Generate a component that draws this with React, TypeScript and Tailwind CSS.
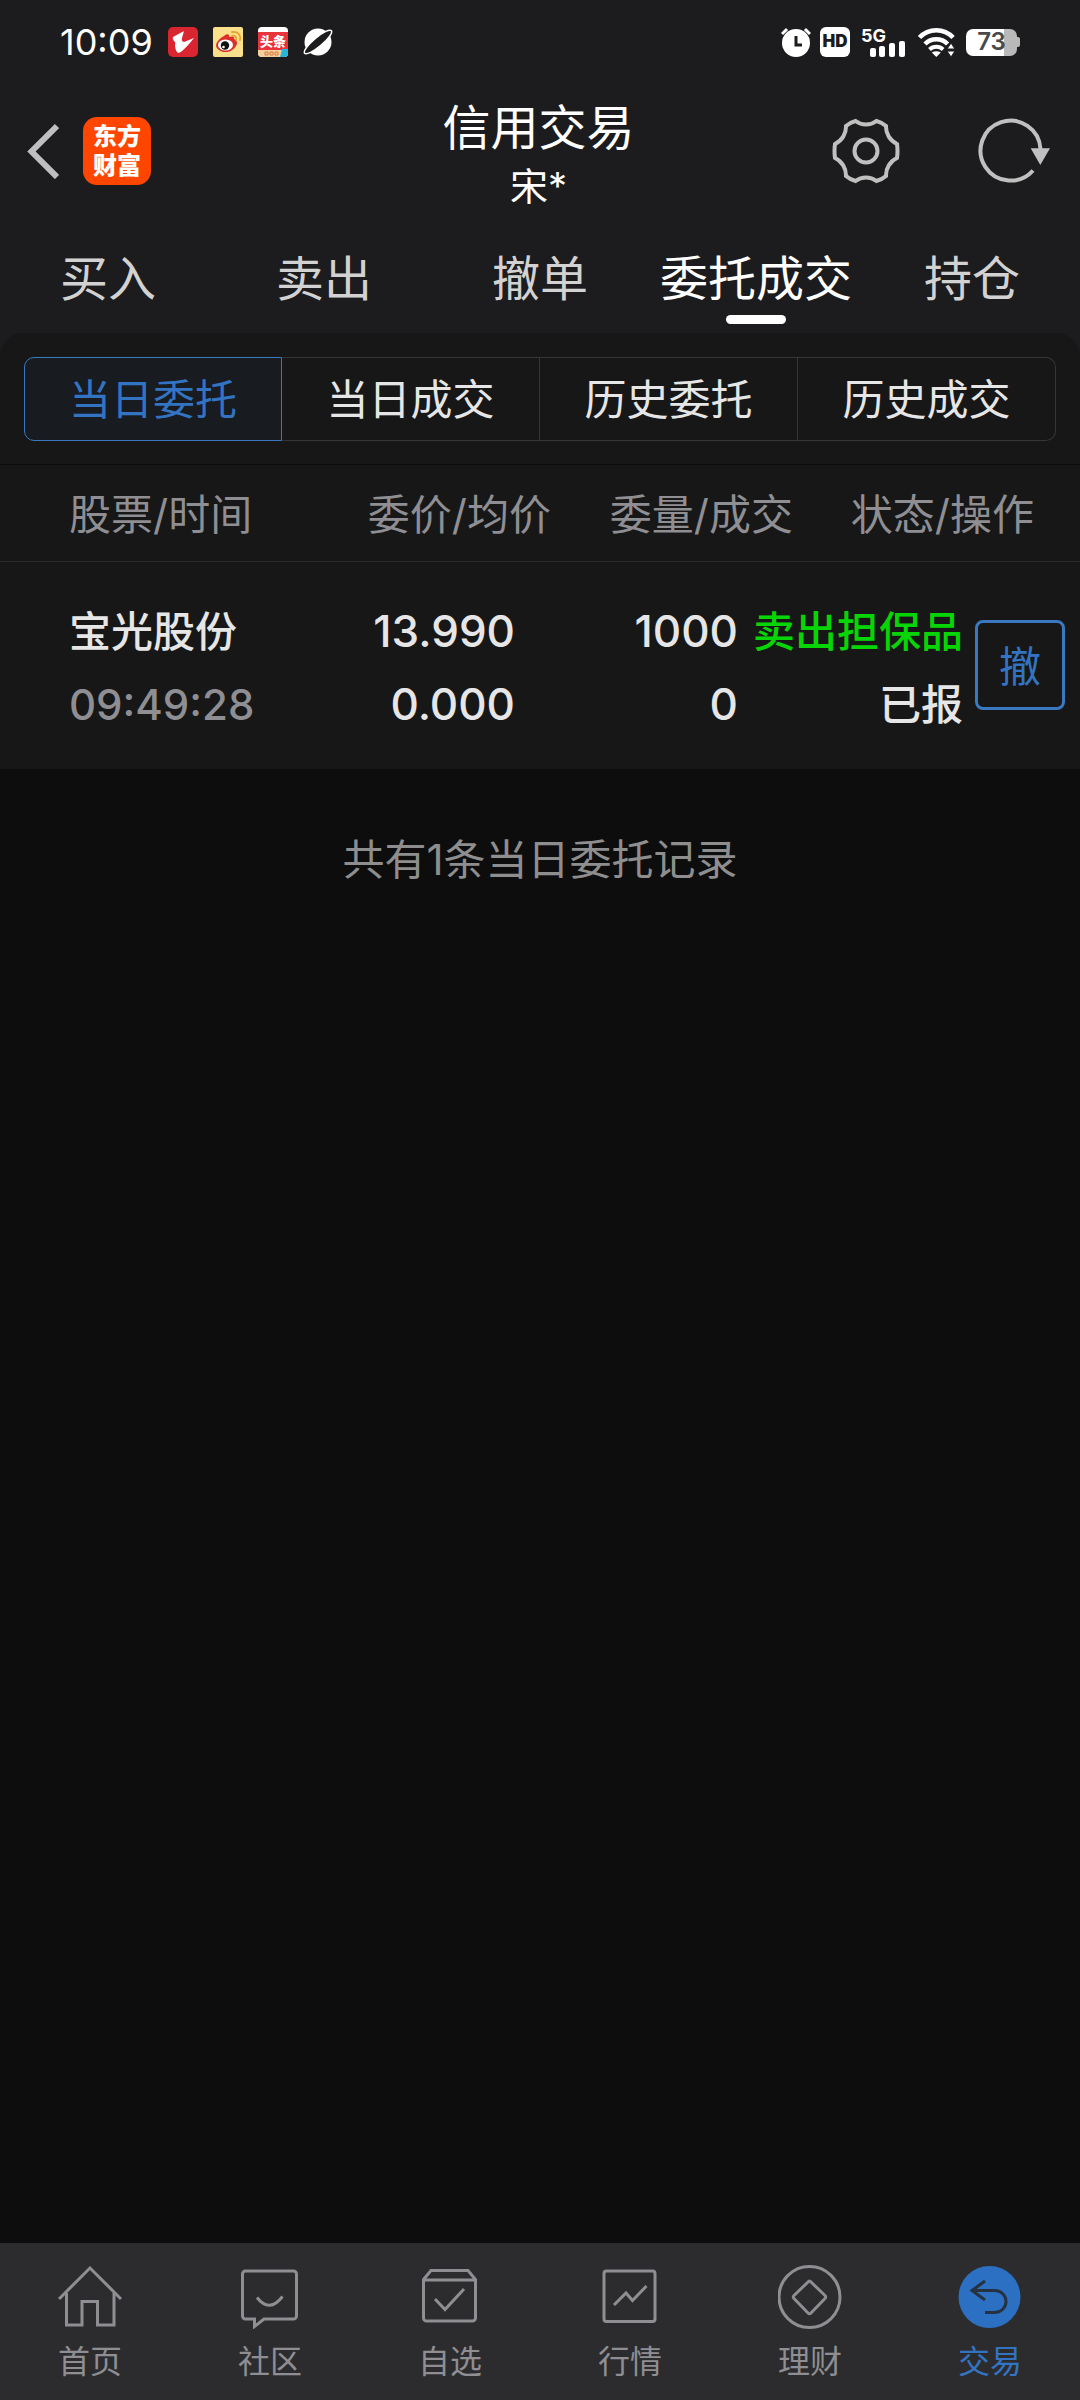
import React, { useState } from 'react';

interface Order {
  name: string;
  time: string;
  price: string;
  avgPrice: string;
  amount: number;
  filled: number;
  direction: string;
  status: string;
}

const tabs = ['买入', '卖出', '撤单', '委托成交', '持仓'];
const segments = ['当日委托', '当日成交', '历史委托', '历史成交'];

const orders: Order[] = [
  {
    name: '宝光股份',
    time: '09:49:28',
    price: '13.990',
    avgPrice: '0.000',
    amount: 1000,
    filled: 0,
    direction: '卖出担保品',
    status: '已报',
  },
];

const navItems = [
  {
    label: '首页',
    icon: (
      <>
        <path d="M1 34 32 3l31 31" />
        <path d="M8.500 28v32H24V36.500h15.500V60H56V28" />
      </>
    ),
  },
  {
    label: '社区',
    icon: (
      <>
        <path d="M7.500 6h48a3 3 0 0 1 3 3v42a3 3 0 0 1-3 3H26l-9.500 7.500V54h-9a3 3 0 0 1-3-3V9a3 3 0 0 1 3-3z" />
        <path d="M19 32.500q12.500 16 25.500-1" />
      </>
    ),
  },
  {
    label: '自选',
    icon: (
      <>
        <path d="M5.500 14.500 13 5.500h37l7.500 9V53a3 3 0 0 1-3 3h-46a3 3 0 0 1-3-3zM5.500 15h52" />
        <path d="m17 34 10 10.500L46 24" />
      </>
    ),
  },
  {
    label: '行情',
    icon: (
      <>
        <rect x="6" y="6" width="51" height="50.500" rx="2.500" />
        <path d="m16 40 12-12 6.500 7.500L48.500 21" />
      </>
    ),
  },
  {
    label: '理财',
    icon: (
      <>
        <circle cx="31.500" cy="32" r="30.500" />
        <path d="M30 17q1.500-2 3 0l14 13.500q1.500 1.500 0 3L33 48q-1.500 1.500-3 0L16 33.500q-1.500-1.500 0-3z" />
      </>
    ),
  },
  {
    label: '交易',
    icon: (
      <>
        <circle cx="31.500" cy="32" r="31" fill="#2b70c2" stroke="none" />
        <path d="M27 16 14 25.500 27 35M14 25.500h23a11 11 0 0 1 0 22H27" stroke="#26323f" />
      </>
    ),
  },
];

const StatusBar: React.FC = () => (
  <div className="flex h-[84px] items-center justify-between pl-[60px] pr-[60px] text-white">
    <div className="flex items-center gap-[15px]">
      <span className="text-[36px] leading-[40px]">10:09</span>
      <svg className="size-[30px]" viewBox="0 0 30 30">
        <rect width="30" height="30" rx="5" fill="#d9252f" />
        <path d="M16 4 5 10q-1 2 1 4 2 1 1 4 0 5 3 8 4 0 16-15l-10 4q-3-1-2-4z" fill="#fff" />
      </svg>
      <svg className="size-[30px]" viewBox="0 0 30 30">
        <rect width="30" height="30" rx="2" fill="#fbe08c" />
        <path d="M11 9c3-3 6-2 5 1 3-1 6-1 5 2 3 1 4 4 2 7-3 6-12 8-17 4-6-4-2-10 5-14z" fill="#dc2f2b" />
        <ellipse cx="12.500" cy="18" rx="7.500" ry="5.500" fill="#fff" />
        <circle cx="12" cy="18.500" r="4.200" fill="#111" />
        <circle cx="10.500" cy="20" r="1.300" fill="#fff" />
        <path d="M19 9c3-1 5 1 4 4M19 5c6-1 9 3 8 8" fill="none" stroke="#e8a32c" strokeWidth="1.800" strokeLinecap="round" />
      </svg>
      <svg className="size-[30px]" viewBox="0 0 30 30">
        <rect width="30" height="30" rx="4" fill="#fff" />
        <path d="M0 5h30v18H0z" fill="#e8343a" />
        <path d="M0 23h30v3a4 4 0 0 1-4 4H4a4 4 0 0 1-4-4z" fill="#f5cf9c" />
        <path d="M24 22h6v4a4 4 0 0 1-4 4h-4z" fill="#25b5d8" />
        <text x="15" y="19" textAnchor="middle" fontSize="13" fontWeight="900" fill="#fff">头条</text>
        <path d="M7 25h3v3H7zM12 25h3v3h-3zM17 25h3v3h-3z" fill="none" stroke="#d8783c" />
      </svg>
      <svg className="size-[30px]" viewBox="0 0 30 30" fill="none">
        <circle cx="15" cy="15" r="13.500" fill="#fff" />
        <ellipse cx="15" cy="15" rx="17.500" ry="4.500" transform="rotate(-40 15 15)" fill="#1c1c1e" stroke="#fff" strokeWidth="1.500" />
      </svg>
    </div>
    <div className="flex items-center gap-[9px]">
      <svg className="size-[30px]" viewBox="0 0 30 30">
        <circle cx="15" cy="16" r="14" fill="#fff" />
        <path d="m1 7 5-5M29 7l-5-5" stroke="#fff" strokeWidth="3" />
        <path d="M15 9v9h6" fill="none" stroke="#1c1c1e" strokeWidth="3" />
      </svg>
      <span className="flex size-[30px] items-center justify-center rounded-[6px] bg-white text-[17px] font-black text-[#1c1c1e]">HD</span>
      <svg className="h-[30px] w-[48px] overflow-visible" viewBox="-2 0 48 30" fill="#fff">
        <text x="0" y="15" fontSize="18" fontWeight="700">5G</text>
        <rect x="9" y="21" width="6" height="9" rx="2" />
        <rect x="18" y="19" width="6" height="11" rx="2" />
        <rect x="28" y="16" width="6" height="14" rx="2" />
        <rect x="38" y="14" width="6" height="16" rx="2" />
      </svg>
      <svg className="h-[30px] w-[41px]" viewBox="-2 0 41 30" fill="none" stroke="#fff" strokeWidth="4.500">
        <path d="M1.500 10.500a23 23 0 0 1 33.600 0" />
        <path d="M7 17a16 16 0 0 1 22.600 0" />
        <path d="M11.500 22.500a10 10 0 0 1 13.600 0" strokeWidth="4" />
        <path d="m18.300 30-4.500-4.500q4.500-2.500 9 0z" fill="#fff" stroke="none" />
        <path d="m33 16 4 6h-8zM33 30l4-6h-8z" fill="#fff" stroke="#1c1c1e" strokeWidth="1" />
      </svg>
      <div className="flex items-center">
        <span className="flex h-[27px] w-[51px] items-center justify-center rounded-[7px] bg-linear-to-r from-white from-75% to-[#b9b9b9] to-75% text-[24px] font-semibold text-[#4a4a4a]">73</span>
        <span className="h-[10px] w-[3px] rounded-r-[2px] bg-[#b9b9b9]" />
      </div>
    </div>
  </div>
);

const TitleBar: React.FC = () => (
  <div className="grid h-[134px] grid-cols-[1fr_auto_1fr] items-center pl-[27px] pr-[30px]">
    <div className="flex items-center gap-6">
      <button aria-label="返回">
        <svg className="h-14 w-8" viewBox="0 0 32 56" fill="none" stroke="#bfbfbf" strokeWidth="6">
          <path d="M30 3 4.500 28.500 30 54" />
        </svg>
      </button>
      <div className="flex size-[68px] flex-col items-center justify-center rounded-[14px] bg-[#ff4600] text-[24px] font-black leading-[29px] text-white">
        <span>东方</span>
        <span>财富</span>
      </div>
    </div>
    <div className="pt-[6px] text-center text-white">
      <h1 className="text-[48px] leading-[64px]">信用交易</h1>
      <p className="text-[38px] leading-[52px]">宋*</p>
    </div>
    <div className="flex items-center justify-end gap-[78px]">
      <button aria-label="设置">
        <svg className="size-[68px]" viewBox="-34 -34 68 68" fill="none" stroke="#c0c0c0" strokeWidth="4">
          <path d="M31-7Q32 0 31 7A19 19 0 0 0 20 25Q16 28.500 10.400 30A17 17 0 0 0-10.400 30Q-16 28.500-20 25A19 19 0 0 0-31 7Q-32 0-31-7A19 19 0 0 0-20-25Q-16-28.500-10.400-30A17 17 0 0 0 10.400-30Q16-28.500 20-25A19 19 0 0 0 31-7Z" />
          <circle r="11.500" />
        </svg>
      </button>
      <button aria-label="刷新">
        <svg className="h-[66px] w-[72px]" viewBox="0 0 72 66" fill="none" stroke="#c0c0c0" strokeWidth="4">
          <path d="M62.500 31A30 30 0 1 0 55 52.500" />
          <path d="M52.700 30.300H72L62.300 47z" fill="#c0c0c0" stroke="none" />
        </svg>
      </button>
    </div>
  </div>
);

const App: React.FC = () => {
  const [tab, setTab] = useState('委托成交');
  const [segment, setSegment] = useState('当日委托');

  return (
    <div className="flex min-h-screen flex-col bg-[#0d0d0d] font-['Inter','Noto_Sans_CJK_SC',sans-serif]">
      <header className="bg-[#1c1c1e]">
        <StatusBar />
        <TitleBar />
        <div className="grid grid-cols-5 pb-[9px] pt-[31px]">
          {tabs.map(t => (
            <button
              key={t}
              onClick={() => setTab(t)}
              className={`flex flex-col items-center gap-[6px] text-[48px] leading-[60px] ${t === tab ? 'text-white' : 'text-[#d2d2d2]'}`}
            >
              {t}
              <span className={`h-[9px] w-[60px] rounded-full ${t === tab ? 'bg-white' : ''}`} />
            </button>
          ))}
        </div>
      </header>

      <main className="flex-1">
        {/* Segment switch */}
        <div className="bg-[#1c1c1e]">
          <div className="rounded-t-[24px] border-b border-[#0c0c0c] bg-[#171717] px-6 pb-[23px] pt-6">
            <div className="grid grid-cols-4">
              {segments.map(s => (
                <button
                  key={s}
                  onClick={() => setSegment(s)}
                  className={`h-[84px] border pt-[2px] text-[42px] leading-[60px] first:rounded-l-[10px] last:rounded-r-[10px] ${
                    s === segment ? 'border-[#3a78c0] bg-[#181c21] text-[#3374c2]' : 'border-l-0 border-[#363636] text-[#e6e6e6]'
                  }`}
                >
                  {s}
                </button>
              ))}
            </div>
          </div>
        </div>

        {/* Orders */}
        <table className="block bg-[#171717] text-[42px]">
          <thead className="block">
            <tr className="grid grid-cols-[309fr_242fr_242fr_287fr] border-b border-[#2a2a2a] pb-4 pt-5 leading-[60px] text-[#8e8e93]">
              <th className="pl-[69px] text-left font-normal">股票/时间</th>
              <th className="text-right font-normal">委价/均价</th>
              <th className="text-right font-normal">委量/成交</th>
              <th className="pr-[46px] text-right font-normal">状态/操作</th>
            </tr>
          </thead>
          <tbody className="block">
            {orders.map(o => (
              <tr key={o.time} className="grid grid-cols-[281fr_234fr_223fr_225fr_117fr] items-center pb-7 pt-[33px] text-right font-medium leading-[73px] text-[#e6e6e6]">
                <td className="pl-[69px] text-left">
                  <div>{o.name}</div>
                  <div className="text-[#8e8e93]">{o.time}</div>
                </td>
                <td className="text-[44px]">
                  <div>{o.price}</div>
                  <div>{o.avgPrice}</div>
                </td>
                <td className="text-[44px]">
                  <div>{o.amount}</div>
                  <div>{o.filled}</div>
                </td>
                <td>
                  <div className="text-[#06d506]">{o.direction}</div>
                  <div>{o.status}</div>
                </td>
                <td className="flex justify-end pb-[6px] pr-[15px]">
                  <button className="size-[90px] rounded-[8px] border-3 border-[#3a78c0] pt-[2px] font-normal text-[#3374c2]">撤</button>
                </td>
              </tr>
            ))}
          </tbody>
        </table>

        <p className="pt-[61px] text-center text-[42px] leading-[60px] text-[#8e8e8e]">共有{orders.length}条当日委托记录</p>
      </main>

      <nav className="sticky bottom-0 grid grid-cols-6 bg-[#2c2c2e] pb-[18px] pt-[22px]">
        {navItems.map(item => (
          <a
            key={item.label}
            href="#"
            className={`flex flex-col items-center gap-[13px] text-[32px] leading-[40px] ${item.label === '交易' ? 'text-[#3374c2]' : 'text-[#8e8e93]'}`}
          >
            <svg className="size-16" viewBox="0 0 64 64" fill="none" stroke="currentColor" strokeWidth="3">
              {item.icon}
            </svg>
            {item.label}
          </a>
        ))}
      </nav>
    </div>
  );
};

export default App;
